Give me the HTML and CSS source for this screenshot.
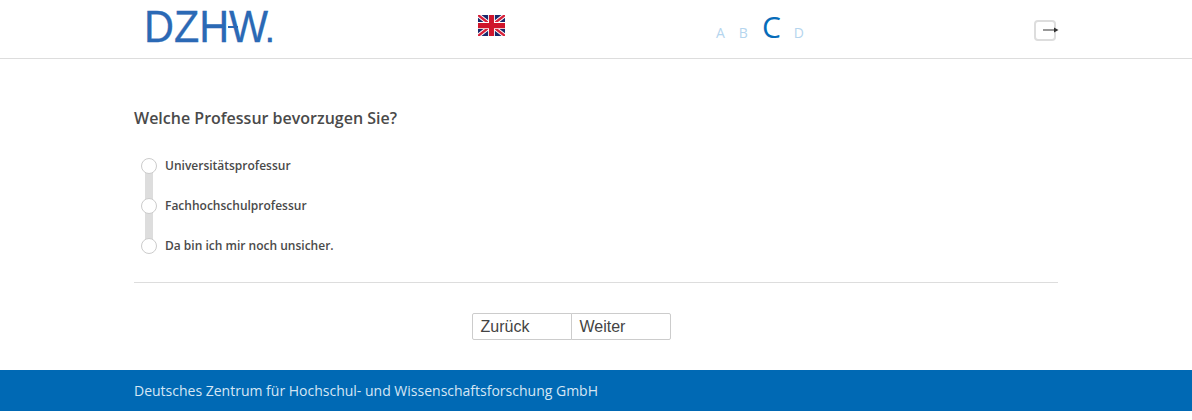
FILE: index.html
```html
<!DOCTYPE html>
<html lang="de">
<head>
<meta charset="utf-8">
<title>DZHW</title>
<link rel="stylesheet" href="styles.css">
</head>
<body>
<header class="header">
  <div class="wrap header-inner">
    <div class="logo">
      <span class="logo-text">DZHW<span class="logo-dot">.</span></span>
      <span class="logo-bar"></span>
    </div>
    <svg class="flag" viewBox="0 0 60 44" width="27" height="21" preserveAspectRatio="none">
      <rect width="60" height="44" fill="#1a2a6c"/>
      <path d="M0 0L60 44M60 0L0 44" stroke="#fff" stroke-width="9"/>
      <path d="M0 0L60 44M60 0L0 44" stroke="#d8213a" stroke-width="5"/>
      <path d="M30 0V44M0 22H60" stroke="#fff" stroke-width="15"/>
      <path d="M30 0V44M0 22H60" stroke="#cf142b" stroke-width="11"/>
    </svg>
    <div class="steps">
      <span class="step">A</span>
      <span class="step">B</span>
      <span class="step step-active">C</span>
      <span class="step">D</span>
    </div>
    <button class="exit" type="button" aria-label="Abmelden">
      <svg viewBox="0 0 16 8" width="16" height="8"><path d="M0 4H12" stroke="#555" stroke-width="1.2"/><path d="M11 1.5L15.5 4L11 6.5Z" fill="#333"/></svg>
    </button>
  </div>
</header>
<main class="wrap main">
  <h1 class="question">Welche Professur bevorzugen Sie?</h1>
  <ul class="options">
    <li class="option"><span class="radio"></span><span class="label">Universitätsprofessur</span></li>
    <li class="option"><span class="radio"></span><span class="label">Fachhochschulprofessur</span></li>
    <li class="option"><span class="radio"></span><span class="label">Da bin ich mir noch unsicher.</span></li>
  </ul>
  <hr class="rule">
  <div class="buttons">
    <button class="btn" type="button">Zurück</button><button class="btn btn-next" type="button">Weiter</button>
  </div>
</main>
<footer class="footer">
  <div class="wrap footer-text">Deutsches Zentrum für Hochschul- und Wissenschaftsforschung GmbH</div>
</footer>
</body>
</html>
```
FILE: styles.css
```css
* { box-sizing: border-box; }
html, body { margin: 0; padding: 0; background: #fff; }
body { font-family: "Open Sans", sans-serif; color: #444; height: 420px; overflow: hidden; }
.wrap { width: 924px; margin: 0 auto; }

.header { height: 59px; border-bottom: 1px solid #ddd; }
.header-inner { height: 58px; position: relative; }
.logo { position: absolute; left: 10px; top: 0; width: 130px; height: 58px; }
.logo-text { display: block; font-family: "Liberation Sans", sans-serif; font-size: 45px; line-height: 54px; color: #2b69b5; white-space: nowrap; transform: scaleX(0.92); transform-origin: 0 0; -webkit-text-stroke: 0.3px #2b69b5; }
.logo-dot { font-size: 28px; font-weight: 700; margin-left: -2px; }
.logo-bar { position: absolute; left: 84px; top: 26px; width: 10px; height: 2px; background: #2b69b5; }
.flag { position: absolute; left: 344px; top: 15px; }
.steps { position: absolute; left: 582px; top: 0; display: flex; align-items: baseline; height: 58px; padding-top: 8px; gap: 14px; color: #b5d5ee; font-size: 14px; line-height: 38px; }
.step-active { color: #066cb9; font-size: 30px; font-weight: 500; margin-right: -1px; }
.exit { position: absolute; left: 900px; top: 20px; width: 22px; height: 21px; padding: 0; background: #fff; border: 2px solid #ddd; border-radius: 4px; }
.exit svg { position: absolute; left: 7px; top: 4px; }

.main { padding-top: 48px; }
.question { margin: 0; font-size: 16px; line-height: 22px; font-weight: 600; color: #4a4a4a; }
.options { list-style: none; margin: 17px 0 0; padding: 0 0 0 7px; position: relative; }
.options::before { content: ""; position: absolute; left: 11px; top: 20px; bottom: 20px; width: 8px; background: #ddd; }
.option { display: flex; align-items: center; height: 40px; position: relative; }
.radio { width: 16px; height: 16px; border: 1px solid #ccc; border-radius: 50%; background: #fff; flex: none; }
.label { margin-left: 8px; margin-bottom: 2px; font-size: 12px; font-weight: 600; color: #4a4a4a; }
.rule { border: 0; border-top: 1px solid #ddd; margin: 16px 0 0; }
.buttons { display: flex; justify-content: center; margin-top: 30px; padding-right: 50px; }
.btn { width: 100px; height: 27px; padding: 0 0 0 8px; text-align: left; font-family: "Liberation Sans", sans-serif; font-size: 16px; color: #444; background: #fff; border: 1px solid #ccc; border-radius: 2px 0 0 2px; }
.btn-next { margin-left: -1px; border-radius: 0 2px 2px 0; }

.footer { position: absolute; left: 0; right: 0; top: 370px; height: 41px; background: #0069b4; }
.footer-text { font-size: 14px; line-height: 41px; color: #d5e6f4; }
```
